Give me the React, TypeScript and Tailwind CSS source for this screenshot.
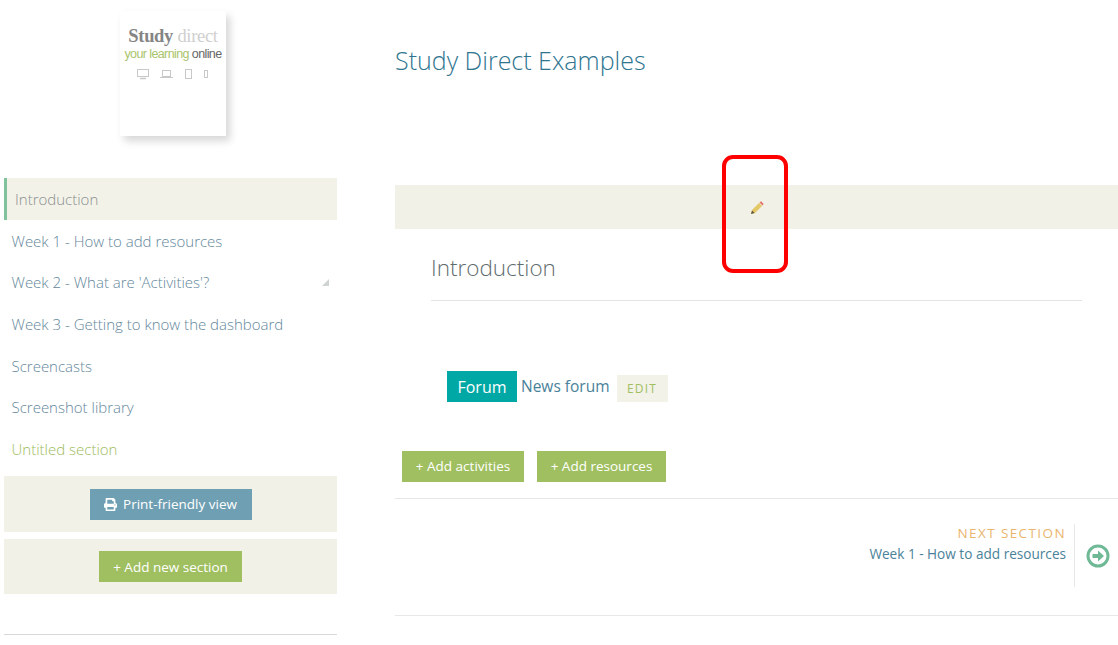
import { FaPrint } from "react-icons/fa";

const navItems = [
	"Week 1 - How to add resources",
	"Week 2 - What are 'Activities'?",
	"Week 3 - Getting to know the dashboard",
	"Screencasts",
	"Screenshot library",
];

const Logo = () => {
	return (
		<div className="ml-[120px] mt-[11px] flex h-[125px] w-[106px] flex-col items-center bg-white pt-[15px] shadow-[4px_5px_8px_rgba(0,0,0,0.16)]">
			<div className="h-[20px] font-['Liberation_Serif',serif] text-[18.5px] leading-[20px] tracking-[-0.3px] text-[#a8a8a8]">
				<span className="font-bold text-[#858585]">Study</span> <span className="text-[#cfcfcf]">direct</span>
			</div>
			<div className="h-[16px] font-['Liberation_Sans',sans-serif] text-[12.5px] leading-[16px] tracking-[-0.6px] text-[#a9c46c]">
				your learning <span className="text-[#666]">online</span>
			</div>
			<svg width="74" height="12" viewBox="0 0 74 12" className="mt-[6px]" fill="none" stroke="#c8c8c8" strokeWidth="1">
				<rect x="1.5" y="1.5" width="11" height="7" />
				<path d="M4 10.5h6" strokeWidth="1.5" />
				<rect x="26.5" y="2.5" width="8" height="6" />
				<path d="M24 9.5h13" />
				<rect x="49.5" y="1.5" width="6" height="9" />
				<rect x="68.5" y="2.5" width="3" height="7" />
			</svg>
		</div>
	);
};

const Sidebar = () => {
	return (
		<div className="ml-1 w-[333px] shrink-0 text-[15px] font-light">
			<div className="-ml-1">
				<Logo />
			</div>
			<div className="mt-[42px] flex h-[42px] items-center border-l-[3px] border-[#7fc29b] bg-[#f3f2e8] pl-[8px] text-[#8a9090]">
				Introduction
			</div>
			{navItems.map((item, i) => (
				<div key={item} className="flex h-[41.7px] items-center justify-between pl-[7.5px] pr-[7px] text-[#64879b]">
					<span>{item}</span>
					{i === 1 && (
						<svg width="9" height="9" viewBox="0 0 9 9">
							<path d="M8 1v7H1z" fill="#cfd3d3" />
						</svg>
					)}
				</div>
			))}
			<div className="flex h-[41.7px] items-center pl-[7.5px] text-[#9dbb5c]">Untitled section</div>
			<div className="mt-[6px] flex h-[56px] items-center justify-center bg-[#f2f1e7]">
				<div className="flex h-[31px] w-[162px] items-center justify-center gap-[6px] bg-[#6f9fb3] text-[13.5px] font-normal text-white">
					<FaPrint className="text-[13px]" />
					Print-friendly view
				</div>
			</div>
			<div className="mt-[7px] flex h-[55px] items-center justify-center bg-[#f2f1e7]">
				<div className="flex h-[31px] w-[143px] items-center justify-center bg-[#a0bf60] text-[13.5px] font-normal text-white">
					+ Add new section
				</div>
			</div>
			<div className="mt-[40px] h-px bg-[#d8d8d8]" />
		</div>
	);
};

const Main = () => {
	return (
		<div className="ml-[58px] flex-1">
			<div className="mt-[42px] text-[25px] leading-[36px] font-light text-[#2f7590]">Study Direct Examples</div>
			<div className="mt-[107px] flex h-[44px] items-center justify-center bg-[#f2f1e7]">
				<svg width="16" height="16" viewBox="0 0 16 16" className="ml-[1px] mt-[2px]">
					<path d="M2 14l1-4 7-7 3 3-7 7z" fill="#e4c766" />
					<path d="M10.5 2.5l1.5-1.2 2.7 2.7-1.2 1.5z" fill="#e2736b" />
					<path d="M2 14l1-3.5 2.5 2.5z" fill="#5c5240" />
				</svg>
			</div>
			<div className="mx-[36px] flex h-[72px] items-end border-b border-[#e4e4e4] pb-[17px] text-[22.5px] leading-[30px] font-light text-[#5f6c6e]">
				Introduction
			</div>
			<div className="mt-[70px] ml-[52px] flex items-end">
				<div className="flex h-[31px] w-[70px] items-center justify-center bg-[#00a8a5] text-white">Forum</div>
				<div className="ml-[4px] h-[31px] text-[15.5px] leading-[31px] text-[#4a8299]">News forum</div>
				<div className="ml-[7px] flex h-[27px] w-[51px] items-center justify-center bg-[#f3f2e8] text-[12px] tracking-[1.2px] text-[#a0bf60]">
					EDIT
				</div>
			</div>
			<div className="mt-[49px] ml-[7px] flex gap-[13px] text-[13.5px] text-white">
				<div className="flex h-[31px] w-[122px] items-center justify-center bg-[#a0bf60]">+ Add activities</div>
				<div className="flex h-[31px] w-[129px] items-center justify-center bg-[#a0bf60]">+ Add resources</div>
			</div>
			<div className="mt-[16px] h-[118px] border-y border-[#e8e8e8]">
				<div className="mt-[25px] flex h-[63px] justify-end">
					<div className="flex flex-col items-end pr-[8px]">
						<div className="text-[13.5px] leading-[18px] tracking-[1.4px] text-[#eab56e]">NEXT SECTION</div>
						<div className="mt-[2px] text-[13.6px] leading-[20px] text-[#4a8299]">Week 1 - How to add resources</div>
					</div>
					<div className="flex w-[44px] items-center border-l border-[#e8e8e8] pl-[11px]">
						<svg width="24" height="24" viewBox="0 0 24 24" fill="none">
							<circle cx="12" cy="12" r="10" stroke="#6fb996" strokeWidth="3" />
							<path d="M6.5 10h5.5V6.5L18 12l-6 5.5V14H6.5z" fill="#6fb996" />
						</svg>
					</div>
				</div>
			</div>
		</div>
	);
};

export default function App() {
	return (
		<div className="relative flex h-[645px] w-[1118px] overflow-hidden bg-white font-['Open_Sans',sans-serif] text-[16px]">
			<Sidebar />
			<Main />
			<div className="absolute left-[722px] top-[155px] h-[118px] w-[66px] rounded-[11px] border-[4px] border-[#ff0000]" />
		</div>
	);
}
